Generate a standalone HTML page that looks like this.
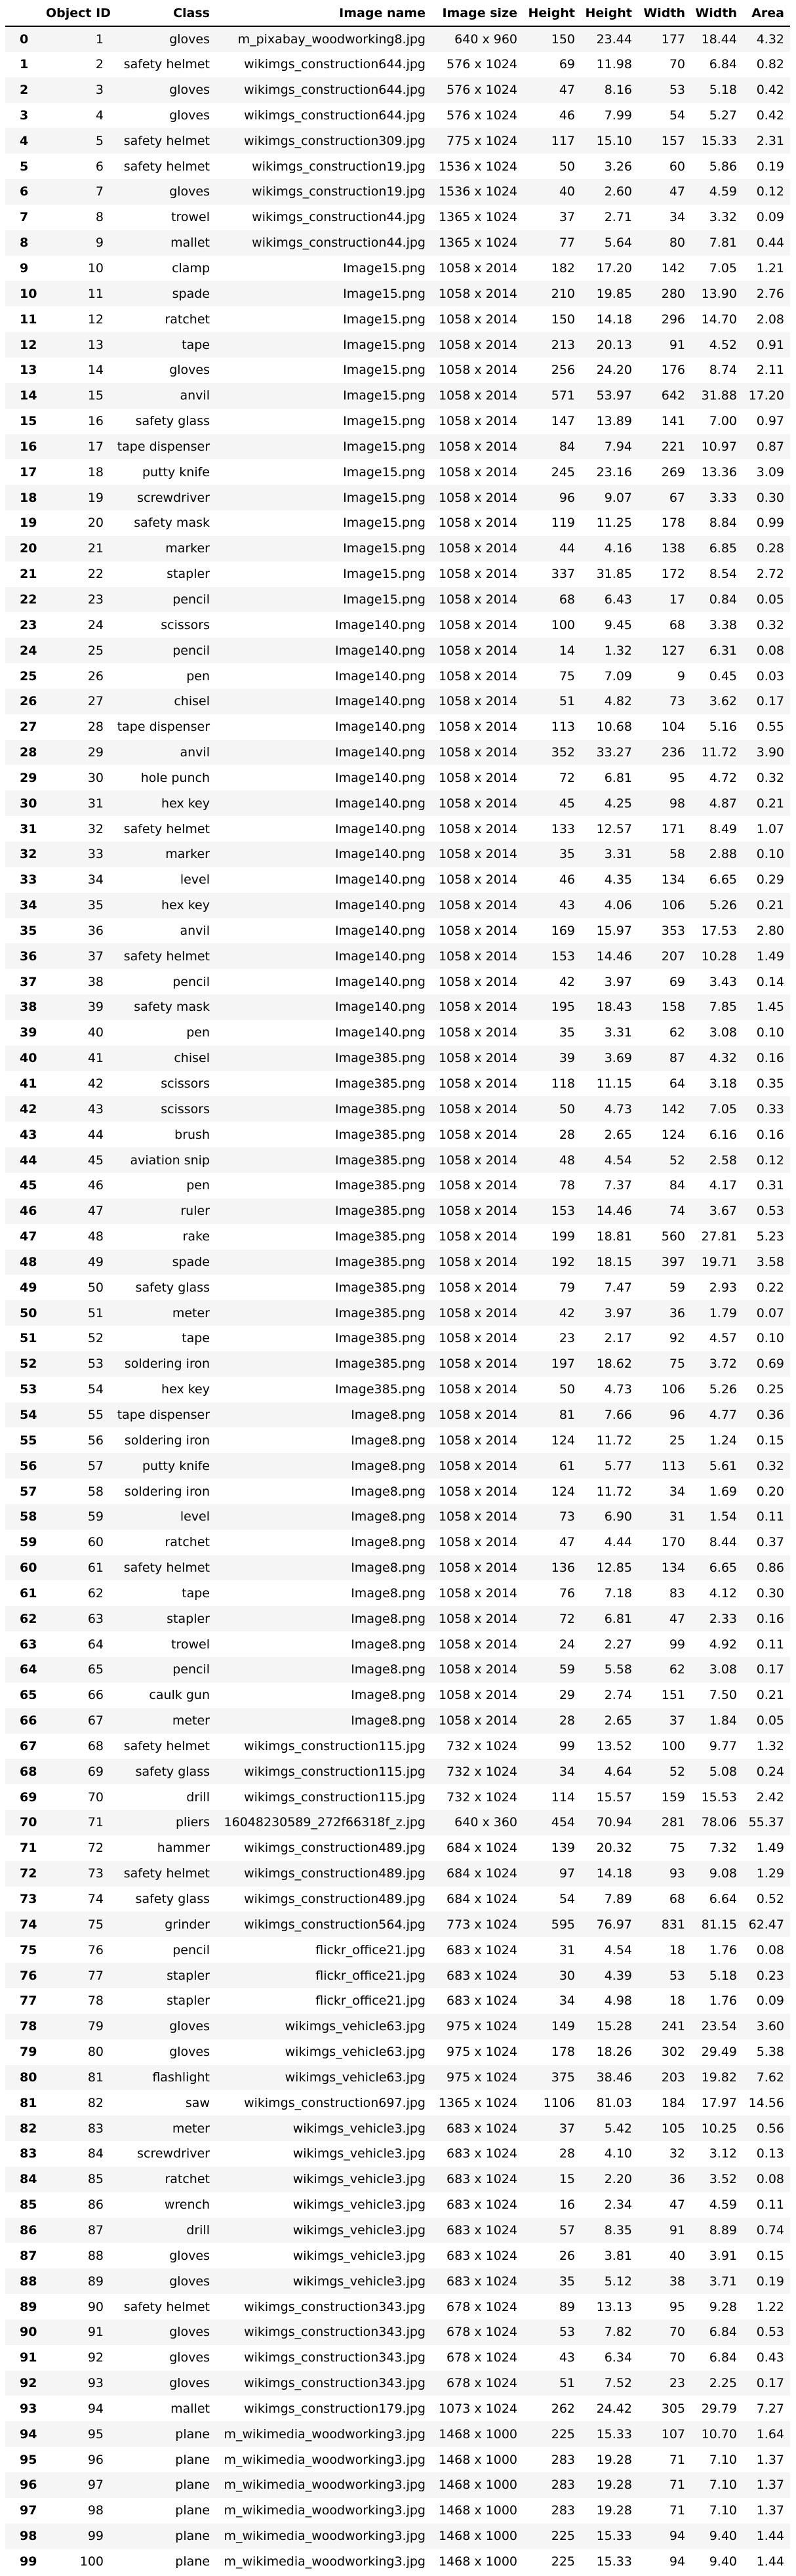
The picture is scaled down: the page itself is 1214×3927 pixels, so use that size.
<!DOCTYPE html>
<html><head><meta charset="utf-8">
<style>
html,body{margin:0;padding:0;background:#fff;}
body{width:1214px;height:3927px;overflow:hidden;font-family:"DejaVu Sans","Liberation Sans",sans-serif;font-size:19px;color:#000;}
table{position:absolute;left:8px;top:0;border-collapse:collapse;table-layout:fixed;width:1197px;}
th,td{padding:0;text-align:right;white-space:nowrap;overflow:visible;}
thead th{height:39px;border-bottom:2.5px solid #000;vertical-align:middle;font-weight:bold;}
tbody tr{height:38.85px;}
tbody th{text-align:left;padding-left:22px;font-weight:bold;}
tbody tr:nth-child(odd){background:#f5f5f5;}
col.a{width:62px}col.b{width:88px}col.c{width:162px}col.d{width:329px}col.e{width:140px}
col.f{width:88px}col.g{width:87px}col.h{width:81px}col.i{width:79px}col.j{width:72px}col.k{width:9px}
</style></head><body>
<table>
<colgroup><col class="a"><col class="b"><col class="c"><col class="d"><col class="e"><col class="f"><col class="g"><col class="h"><col class="i"><col class="j"><col class="k"></colgroup>
<thead><tr><th></th><th>Object ID</th><th>Class</th><th>Image name</th><th>Image size</th><th>Height</th><th>Height</th><th>Width</th><th>Width</th><th>Area</th><th></th></tr></thead>
<tbody>
<tr><th>0</th><td>1</td><td>gloves</td><td>m_pixabay_woodworking8.jpg</td><td>640 x 960</td><td>150</td><td>23.44</td><td>177</td><td>18.44</td><td>4.32</td><td></td></tr>
<tr><th>1</th><td>2</td><td>safety helmet</td><td>wikimgs_construction644.jpg</td><td>576 x 1024</td><td>69</td><td>11.98</td><td>70</td><td>6.84</td><td>0.82</td><td></td></tr>
<tr><th>2</th><td>3</td><td>gloves</td><td>wikimgs_construction644.jpg</td><td>576 x 1024</td><td>47</td><td>8.16</td><td>53</td><td>5.18</td><td>0.42</td><td></td></tr>
<tr><th>3</th><td>4</td><td>gloves</td><td>wikimgs_construction644.jpg</td><td>576 x 1024</td><td>46</td><td>7.99</td><td>54</td><td>5.27</td><td>0.42</td><td></td></tr>
<tr><th>4</th><td>5</td><td>safety helmet</td><td>wikimgs_construction309.jpg</td><td>775 x 1024</td><td>117</td><td>15.10</td><td>157</td><td>15.33</td><td>2.31</td><td></td></tr>
<tr><th>5</th><td>6</td><td>safety helmet</td><td>wikimgs_construction19.jpg</td><td>1536 x 1024</td><td>50</td><td>3.26</td><td>60</td><td>5.86</td><td>0.19</td><td></td></tr>
<tr><th>6</th><td>7</td><td>gloves</td><td>wikimgs_construction19.jpg</td><td>1536 x 1024</td><td>40</td><td>2.60</td><td>47</td><td>4.59</td><td>0.12</td><td></td></tr>
<tr><th>7</th><td>8</td><td>trowel</td><td>wikimgs_construction44.jpg</td><td>1365 x 1024</td><td>37</td><td>2.71</td><td>34</td><td>3.32</td><td>0.09</td><td></td></tr>
<tr><th>8</th><td>9</td><td>mallet</td><td>wikimgs_construction44.jpg</td><td>1365 x 1024</td><td>77</td><td>5.64</td><td>80</td><td>7.81</td><td>0.44</td><td></td></tr>
<tr><th>9</th><td>10</td><td>clamp</td><td>Image15.png</td><td>1058 x 2014</td><td>182</td><td>17.20</td><td>142</td><td>7.05</td><td>1.21</td><td></td></tr>
<tr><th>10</th><td>11</td><td>spade</td><td>Image15.png</td><td>1058 x 2014</td><td>210</td><td>19.85</td><td>280</td><td>13.90</td><td>2.76</td><td></td></tr>
<tr><th>11</th><td>12</td><td>ratchet</td><td>Image15.png</td><td>1058 x 2014</td><td>150</td><td>14.18</td><td>296</td><td>14.70</td><td>2.08</td><td></td></tr>
<tr><th>12</th><td>13</td><td>tape</td><td>Image15.png</td><td>1058 x 2014</td><td>213</td><td>20.13</td><td>91</td><td>4.52</td><td>0.91</td><td></td></tr>
<tr><th>13</th><td>14</td><td>gloves</td><td>Image15.png</td><td>1058 x 2014</td><td>256</td><td>24.20</td><td>176</td><td>8.74</td><td>2.11</td><td></td></tr>
<tr><th>14</th><td>15</td><td>anvil</td><td>Image15.png</td><td>1058 x 2014</td><td>571</td><td>53.97</td><td>642</td><td>31.88</td><td>17.20</td><td></td></tr>
<tr><th>15</th><td>16</td><td>safety glass</td><td>Image15.png</td><td>1058 x 2014</td><td>147</td><td>13.89</td><td>141</td><td>7.00</td><td>0.97</td><td></td></tr>
<tr><th>16</th><td>17</td><td>tape dispenser</td><td>Image15.png</td><td>1058 x 2014</td><td>84</td><td>7.94</td><td>221</td><td>10.97</td><td>0.87</td><td></td></tr>
<tr><th>17</th><td>18</td><td>putty knife</td><td>Image15.png</td><td>1058 x 2014</td><td>245</td><td>23.16</td><td>269</td><td>13.36</td><td>3.09</td><td></td></tr>
<tr><th>18</th><td>19</td><td>screwdriver</td><td>Image15.png</td><td>1058 x 2014</td><td>96</td><td>9.07</td><td>67</td><td>3.33</td><td>0.30</td><td></td></tr>
<tr><th>19</th><td>20</td><td>safety mask</td><td>Image15.png</td><td>1058 x 2014</td><td>119</td><td>11.25</td><td>178</td><td>8.84</td><td>0.99</td><td></td></tr>
<tr><th>20</th><td>21</td><td>marker</td><td>Image15.png</td><td>1058 x 2014</td><td>44</td><td>4.16</td><td>138</td><td>6.85</td><td>0.28</td><td></td></tr>
<tr><th>21</th><td>22</td><td>stapler</td><td>Image15.png</td><td>1058 x 2014</td><td>337</td><td>31.85</td><td>172</td><td>8.54</td><td>2.72</td><td></td></tr>
<tr><th>22</th><td>23</td><td>pencil</td><td>Image15.png</td><td>1058 x 2014</td><td>68</td><td>6.43</td><td>17</td><td>0.84</td><td>0.05</td><td></td></tr>
<tr><th>23</th><td>24</td><td>scissors</td><td>Image140.png</td><td>1058 x 2014</td><td>100</td><td>9.45</td><td>68</td><td>3.38</td><td>0.32</td><td></td></tr>
<tr><th>24</th><td>25</td><td>pencil</td><td>Image140.png</td><td>1058 x 2014</td><td>14</td><td>1.32</td><td>127</td><td>6.31</td><td>0.08</td><td></td></tr>
<tr><th>25</th><td>26</td><td>pen</td><td>Image140.png</td><td>1058 x 2014</td><td>75</td><td>7.09</td><td>9</td><td>0.45</td><td>0.03</td><td></td></tr>
<tr><th>26</th><td>27</td><td>chisel</td><td>Image140.png</td><td>1058 x 2014</td><td>51</td><td>4.82</td><td>73</td><td>3.62</td><td>0.17</td><td></td></tr>
<tr><th>27</th><td>28</td><td>tape dispenser</td><td>Image140.png</td><td>1058 x 2014</td><td>113</td><td>10.68</td><td>104</td><td>5.16</td><td>0.55</td><td></td></tr>
<tr><th>28</th><td>29</td><td>anvil</td><td>Image140.png</td><td>1058 x 2014</td><td>352</td><td>33.27</td><td>236</td><td>11.72</td><td>3.90</td><td></td></tr>
<tr><th>29</th><td>30</td><td>hole punch</td><td>Image140.png</td><td>1058 x 2014</td><td>72</td><td>6.81</td><td>95</td><td>4.72</td><td>0.32</td><td></td></tr>
<tr><th>30</th><td>31</td><td>hex key</td><td>Image140.png</td><td>1058 x 2014</td><td>45</td><td>4.25</td><td>98</td><td>4.87</td><td>0.21</td><td></td></tr>
<tr><th>31</th><td>32</td><td>safety helmet</td><td>Image140.png</td><td>1058 x 2014</td><td>133</td><td>12.57</td><td>171</td><td>8.49</td><td>1.07</td><td></td></tr>
<tr><th>32</th><td>33</td><td>marker</td><td>Image140.png</td><td>1058 x 2014</td><td>35</td><td>3.31</td><td>58</td><td>2.88</td><td>0.10</td><td></td></tr>
<tr><th>33</th><td>34</td><td>level</td><td>Image140.png</td><td>1058 x 2014</td><td>46</td><td>4.35</td><td>134</td><td>6.65</td><td>0.29</td><td></td></tr>
<tr><th>34</th><td>35</td><td>hex key</td><td>Image140.png</td><td>1058 x 2014</td><td>43</td><td>4.06</td><td>106</td><td>5.26</td><td>0.21</td><td></td></tr>
<tr><th>35</th><td>36</td><td>anvil</td><td>Image140.png</td><td>1058 x 2014</td><td>169</td><td>15.97</td><td>353</td><td>17.53</td><td>2.80</td><td></td></tr>
<tr><th>36</th><td>37</td><td>safety helmet</td><td>Image140.png</td><td>1058 x 2014</td><td>153</td><td>14.46</td><td>207</td><td>10.28</td><td>1.49</td><td></td></tr>
<tr><th>37</th><td>38</td><td>pencil</td><td>Image140.png</td><td>1058 x 2014</td><td>42</td><td>3.97</td><td>69</td><td>3.43</td><td>0.14</td><td></td></tr>
<tr><th>38</th><td>39</td><td>safety mask</td><td>Image140.png</td><td>1058 x 2014</td><td>195</td><td>18.43</td><td>158</td><td>7.85</td><td>1.45</td><td></td></tr>
<tr><th>39</th><td>40</td><td>pen</td><td>Image140.png</td><td>1058 x 2014</td><td>35</td><td>3.31</td><td>62</td><td>3.08</td><td>0.10</td><td></td></tr>
<tr><th>40</th><td>41</td><td>chisel</td><td>Image385.png</td><td>1058 x 2014</td><td>39</td><td>3.69</td><td>87</td><td>4.32</td><td>0.16</td><td></td></tr>
<tr><th>41</th><td>42</td><td>scissors</td><td>Image385.png</td><td>1058 x 2014</td><td>118</td><td>11.15</td><td>64</td><td>3.18</td><td>0.35</td><td></td></tr>
<tr><th>42</th><td>43</td><td>scissors</td><td>Image385.png</td><td>1058 x 2014</td><td>50</td><td>4.73</td><td>142</td><td>7.05</td><td>0.33</td><td></td></tr>
<tr><th>43</th><td>44</td><td>brush</td><td>Image385.png</td><td>1058 x 2014</td><td>28</td><td>2.65</td><td>124</td><td>6.16</td><td>0.16</td><td></td></tr>
<tr><th>44</th><td>45</td><td>aviation snip</td><td>Image385.png</td><td>1058 x 2014</td><td>48</td><td>4.54</td><td>52</td><td>2.58</td><td>0.12</td><td></td></tr>
<tr><th>45</th><td>46</td><td>pen</td><td>Image385.png</td><td>1058 x 2014</td><td>78</td><td>7.37</td><td>84</td><td>4.17</td><td>0.31</td><td></td></tr>
<tr><th>46</th><td>47</td><td>ruler</td><td>Image385.png</td><td>1058 x 2014</td><td>153</td><td>14.46</td><td>74</td><td>3.67</td><td>0.53</td><td></td></tr>
<tr><th>47</th><td>48</td><td>rake</td><td>Image385.png</td><td>1058 x 2014</td><td>199</td><td>18.81</td><td>560</td><td>27.81</td><td>5.23</td><td></td></tr>
<tr><th>48</th><td>49</td><td>spade</td><td>Image385.png</td><td>1058 x 2014</td><td>192</td><td>18.15</td><td>397</td><td>19.71</td><td>3.58</td><td></td></tr>
<tr><th>49</th><td>50</td><td>safety glass</td><td>Image385.png</td><td>1058 x 2014</td><td>79</td><td>7.47</td><td>59</td><td>2.93</td><td>0.22</td><td></td></tr>
<tr><th>50</th><td>51</td><td>meter</td><td>Image385.png</td><td>1058 x 2014</td><td>42</td><td>3.97</td><td>36</td><td>1.79</td><td>0.07</td><td></td></tr>
<tr><th>51</th><td>52</td><td>tape</td><td>Image385.png</td><td>1058 x 2014</td><td>23</td><td>2.17</td><td>92</td><td>4.57</td><td>0.10</td><td></td></tr>
<tr><th>52</th><td>53</td><td>soldering iron</td><td>Image385.png</td><td>1058 x 2014</td><td>197</td><td>18.62</td><td>75</td><td>3.72</td><td>0.69</td><td></td></tr>
<tr><th>53</th><td>54</td><td>hex key</td><td>Image385.png</td><td>1058 x 2014</td><td>50</td><td>4.73</td><td>106</td><td>5.26</td><td>0.25</td><td></td></tr>
<tr><th>54</th><td>55</td><td>tape dispenser</td><td>Image8.png</td><td>1058 x 2014</td><td>81</td><td>7.66</td><td>96</td><td>4.77</td><td>0.36</td><td></td></tr>
<tr><th>55</th><td>56</td><td>soldering iron</td><td>Image8.png</td><td>1058 x 2014</td><td>124</td><td>11.72</td><td>25</td><td>1.24</td><td>0.15</td><td></td></tr>
<tr><th>56</th><td>57</td><td>putty knife</td><td>Image8.png</td><td>1058 x 2014</td><td>61</td><td>5.77</td><td>113</td><td>5.61</td><td>0.32</td><td></td></tr>
<tr><th>57</th><td>58</td><td>soldering iron</td><td>Image8.png</td><td>1058 x 2014</td><td>124</td><td>11.72</td><td>34</td><td>1.69</td><td>0.20</td><td></td></tr>
<tr><th>58</th><td>59</td><td>level</td><td>Image8.png</td><td>1058 x 2014</td><td>73</td><td>6.90</td><td>31</td><td>1.54</td><td>0.11</td><td></td></tr>
<tr><th>59</th><td>60</td><td>ratchet</td><td>Image8.png</td><td>1058 x 2014</td><td>47</td><td>4.44</td><td>170</td><td>8.44</td><td>0.37</td><td></td></tr>
<tr><th>60</th><td>61</td><td>safety helmet</td><td>Image8.png</td><td>1058 x 2014</td><td>136</td><td>12.85</td><td>134</td><td>6.65</td><td>0.86</td><td></td></tr>
<tr><th>61</th><td>62</td><td>tape</td><td>Image8.png</td><td>1058 x 2014</td><td>76</td><td>7.18</td><td>83</td><td>4.12</td><td>0.30</td><td></td></tr>
<tr><th>62</th><td>63</td><td>stapler</td><td>Image8.png</td><td>1058 x 2014</td><td>72</td><td>6.81</td><td>47</td><td>2.33</td><td>0.16</td><td></td></tr>
<tr><th>63</th><td>64</td><td>trowel</td><td>Image8.png</td><td>1058 x 2014</td><td>24</td><td>2.27</td><td>99</td><td>4.92</td><td>0.11</td><td></td></tr>
<tr><th>64</th><td>65</td><td>pencil</td><td>Image8.png</td><td>1058 x 2014</td><td>59</td><td>5.58</td><td>62</td><td>3.08</td><td>0.17</td><td></td></tr>
<tr><th>65</th><td>66</td><td>caulk gun</td><td>Image8.png</td><td>1058 x 2014</td><td>29</td><td>2.74</td><td>151</td><td>7.50</td><td>0.21</td><td></td></tr>
<tr><th>66</th><td>67</td><td>meter</td><td>Image8.png</td><td>1058 x 2014</td><td>28</td><td>2.65</td><td>37</td><td>1.84</td><td>0.05</td><td></td></tr>
<tr><th>67</th><td>68</td><td>safety helmet</td><td>wikimgs_construction115.jpg</td><td>732 x 1024</td><td>99</td><td>13.52</td><td>100</td><td>9.77</td><td>1.32</td><td></td></tr>
<tr><th>68</th><td>69</td><td>safety glass</td><td>wikimgs_construction115.jpg</td><td>732 x 1024</td><td>34</td><td>4.64</td><td>52</td><td>5.08</td><td>0.24</td><td></td></tr>
<tr><th>69</th><td>70</td><td>drill</td><td>wikimgs_construction115.jpg</td><td>732 x 1024</td><td>114</td><td>15.57</td><td>159</td><td>15.53</td><td>2.42</td><td></td></tr>
<tr><th>70</th><td>71</td><td>pliers</td><td>16048230589_272f66318f_z.jpg</td><td>640 x 360</td><td>454</td><td>70.94</td><td>281</td><td>78.06</td><td>55.37</td><td></td></tr>
<tr><th>71</th><td>72</td><td>hammer</td><td>wikimgs_construction489.jpg</td><td>684 x 1024</td><td>139</td><td>20.32</td><td>75</td><td>7.32</td><td>1.49</td><td></td></tr>
<tr><th>72</th><td>73</td><td>safety helmet</td><td>wikimgs_construction489.jpg</td><td>684 x 1024</td><td>97</td><td>14.18</td><td>93</td><td>9.08</td><td>1.29</td><td></td></tr>
<tr><th>73</th><td>74</td><td>safety glass</td><td>wikimgs_construction489.jpg</td><td>684 x 1024</td><td>54</td><td>7.89</td><td>68</td><td>6.64</td><td>0.52</td><td></td></tr>
<tr><th>74</th><td>75</td><td>grinder</td><td>wikimgs_construction564.jpg</td><td>773 x 1024</td><td>595</td><td>76.97</td><td>831</td><td>81.15</td><td>62.47</td><td></td></tr>
<tr><th>75</th><td>76</td><td>pencil</td><td>flickr_office21.jpg</td><td>683 x 1024</td><td>31</td><td>4.54</td><td>18</td><td>1.76</td><td>0.08</td><td></td></tr>
<tr><th>76</th><td>77</td><td>stapler</td><td>flickr_office21.jpg</td><td>683 x 1024</td><td>30</td><td>4.39</td><td>53</td><td>5.18</td><td>0.23</td><td></td></tr>
<tr><th>77</th><td>78</td><td>stapler</td><td>flickr_office21.jpg</td><td>683 x 1024</td><td>34</td><td>4.98</td><td>18</td><td>1.76</td><td>0.09</td><td></td></tr>
<tr><th>78</th><td>79</td><td>gloves</td><td>wikimgs_vehicle63.jpg</td><td>975 x 1024</td><td>149</td><td>15.28</td><td>241</td><td>23.54</td><td>3.60</td><td></td></tr>
<tr><th>79</th><td>80</td><td>gloves</td><td>wikimgs_vehicle63.jpg</td><td>975 x 1024</td><td>178</td><td>18.26</td><td>302</td><td>29.49</td><td>5.38</td><td></td></tr>
<tr><th>80</th><td>81</td><td>flashlight</td><td>wikimgs_vehicle63.jpg</td><td>975 x 1024</td><td>375</td><td>38.46</td><td>203</td><td>19.82</td><td>7.62</td><td></td></tr>
<tr><th>81</th><td>82</td><td>saw</td><td>wikimgs_construction697.jpg</td><td>1365 x 1024</td><td>1106</td><td>81.03</td><td>184</td><td>17.97</td><td>14.56</td><td></td></tr>
<tr><th>82</th><td>83</td><td>meter</td><td>wikimgs_vehicle3.jpg</td><td>683 x 1024</td><td>37</td><td>5.42</td><td>105</td><td>10.25</td><td>0.56</td><td></td></tr>
<tr><th>83</th><td>84</td><td>screwdriver</td><td>wikimgs_vehicle3.jpg</td><td>683 x 1024</td><td>28</td><td>4.10</td><td>32</td><td>3.12</td><td>0.13</td><td></td></tr>
<tr><th>84</th><td>85</td><td>ratchet</td><td>wikimgs_vehicle3.jpg</td><td>683 x 1024</td><td>15</td><td>2.20</td><td>36</td><td>3.52</td><td>0.08</td><td></td></tr>
<tr><th>85</th><td>86</td><td>wrench</td><td>wikimgs_vehicle3.jpg</td><td>683 x 1024</td><td>16</td><td>2.34</td><td>47</td><td>4.59</td><td>0.11</td><td></td></tr>
<tr><th>86</th><td>87</td><td>drill</td><td>wikimgs_vehicle3.jpg</td><td>683 x 1024</td><td>57</td><td>8.35</td><td>91</td><td>8.89</td><td>0.74</td><td></td></tr>
<tr><th>87</th><td>88</td><td>gloves</td><td>wikimgs_vehicle3.jpg</td><td>683 x 1024</td><td>26</td><td>3.81</td><td>40</td><td>3.91</td><td>0.15</td><td></td></tr>
<tr><th>88</th><td>89</td><td>gloves</td><td>wikimgs_vehicle3.jpg</td><td>683 x 1024</td><td>35</td><td>5.12</td><td>38</td><td>3.71</td><td>0.19</td><td></td></tr>
<tr><th>89</th><td>90</td><td>safety helmet</td><td>wikimgs_construction343.jpg</td><td>678 x 1024</td><td>89</td><td>13.13</td><td>95</td><td>9.28</td><td>1.22</td><td></td></tr>
<tr><th>90</th><td>91</td><td>gloves</td><td>wikimgs_construction343.jpg</td><td>678 x 1024</td><td>53</td><td>7.82</td><td>70</td><td>6.84</td><td>0.53</td><td></td></tr>
<tr><th>91</th><td>92</td><td>gloves</td><td>wikimgs_construction343.jpg</td><td>678 x 1024</td><td>43</td><td>6.34</td><td>70</td><td>6.84</td><td>0.43</td><td></td></tr>
<tr><th>92</th><td>93</td><td>gloves</td><td>wikimgs_construction343.jpg</td><td>678 x 1024</td><td>51</td><td>7.52</td><td>23</td><td>2.25</td><td>0.17</td><td></td></tr>
<tr><th>93</th><td>94</td><td>mallet</td><td>wikimgs_construction179.jpg</td><td>1073 x 1024</td><td>262</td><td>24.42</td><td>305</td><td>29.79</td><td>7.27</td><td></td></tr>
<tr><th>94</th><td>95</td><td>plane</td><td>m_wikimedia_woodworking3.jpg</td><td>1468 x 1000</td><td>225</td><td>15.33</td><td>107</td><td>10.70</td><td>1.64</td><td></td></tr>
<tr><th>95</th><td>96</td><td>plane</td><td>m_wikimedia_woodworking3.jpg</td><td>1468 x 1000</td><td>283</td><td>19.28</td><td>71</td><td>7.10</td><td>1.37</td><td></td></tr>
<tr><th>96</th><td>97</td><td>plane</td><td>m_wikimedia_woodworking3.jpg</td><td>1468 x 1000</td><td>283</td><td>19.28</td><td>71</td><td>7.10</td><td>1.37</td><td></td></tr>
<tr><th>97</th><td>98</td><td>plane</td><td>m_wikimedia_woodworking3.jpg</td><td>1468 x 1000</td><td>283</td><td>19.28</td><td>71</td><td>7.10</td><td>1.37</td><td></td></tr>
<tr><th>98</th><td>99</td><td>plane</td><td>m_wikimedia_woodworking3.jpg</td><td>1468 x 1000</td><td>225</td><td>15.33</td><td>94</td><td>9.40</td><td>1.44</td><td></td></tr>
<tr><th>99</th><td>100</td><td>plane</td><td>m_wikimedia_woodworking3.jpg</td><td>1468 x 1000</td><td>225</td><td>15.33</td><td>94</td><td>9.40</td><td>1.44</td><td></td></tr>
</tbody></table>
</body></html>
